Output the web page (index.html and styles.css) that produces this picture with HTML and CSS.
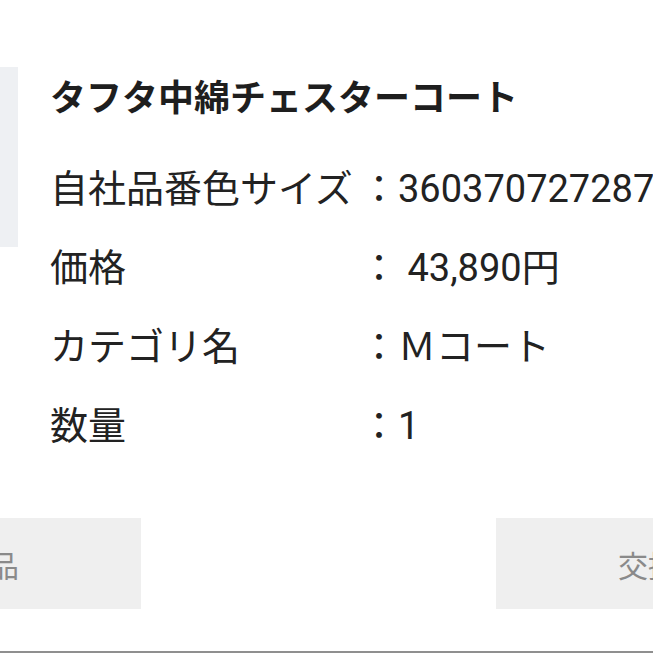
FILE: index.html
```html
<!DOCTYPE html>
<html lang="ja">
<head>
<meta charset="utf-8">
<title>注文詳細</title>
<link rel="stylesheet" href="styles.css">
</head>
<body>
<div class="page">
  <section class="item">
    <div class="thumb"></div>
    <div class="details">
      <h1 class="title">タフタ中綿チェスターコート</h1>
      <dl class="specs">
        <div class="row"><dt>自社品番色サイズ</dt><dd>：3603707272870</dd></div>
        <div class="row"><dt>価格</dt><dd>： 43,890円</dd></div>
        <div class="row"><dt>カテゴリ名</dt><dd>：Ｍコート</dd></div>
        <div class="row"><dt>数量</dt><dd>：1</dd></div>
      </dl>
    </div>
  </section>
  <div class="actions">
    <button class="btn" type="button">返品</button>
    <button class="btn" type="button">交換</button>
  </div>
  <div class="rule"></div>
</div>
</body>
</html>
```
FILE: styles.css
```css
html, body {
  margin: 0;
  padding: 0;
  background: #fff;
  overflow: hidden;
}
body {
  font-family: Roboto, "Noto Sans CJK JP", sans-serif;
  color: #222;
}
.page {
  width: 653px;
  height: 653px;
  overflow: hidden;
}
.item {
  display: flex;
  align-items: flex-start;
  gap: 32px;
  margin-left: -162px;
  padding-top: 67px;
}
.thumb {
  flex: 0 0 180px;
  height: 180px;
  background: #eef0f3;
}
.details {
  padding-top: 7px;
  white-space: nowrap;
}
.title {
  margin: 0;
  font-size: 36px;
  font-weight: 700;
  line-height: 50px;
  color: #1e1e1e;
}
.specs {
  margin: 26px 0 0;
}
.row {
  display: grid;
  grid-template-columns: 310px auto;
  height: 79px;
  line-height: 79px;
  font-size: 38px;
}
.row dt, .row dd {
  margin: 0;
}
.actions {
  display: flex;
  justify-content: space-between;
  width: 963px;
  margin-left: -163px;
  margin-top: 52px;
}
.btn {
  width: 304px;
  height: 91px;
  border: 0;
  padding: 0;
  background: #efefef;
  color: #8a8a8a;
  font-family: Roboto, "Noto Sans CJK JP", sans-serif;
  font-size: 30px;
}
.rule {
  height: 2px;
  background: #8f8f8f;
  margin-top: 42px;
}
```
